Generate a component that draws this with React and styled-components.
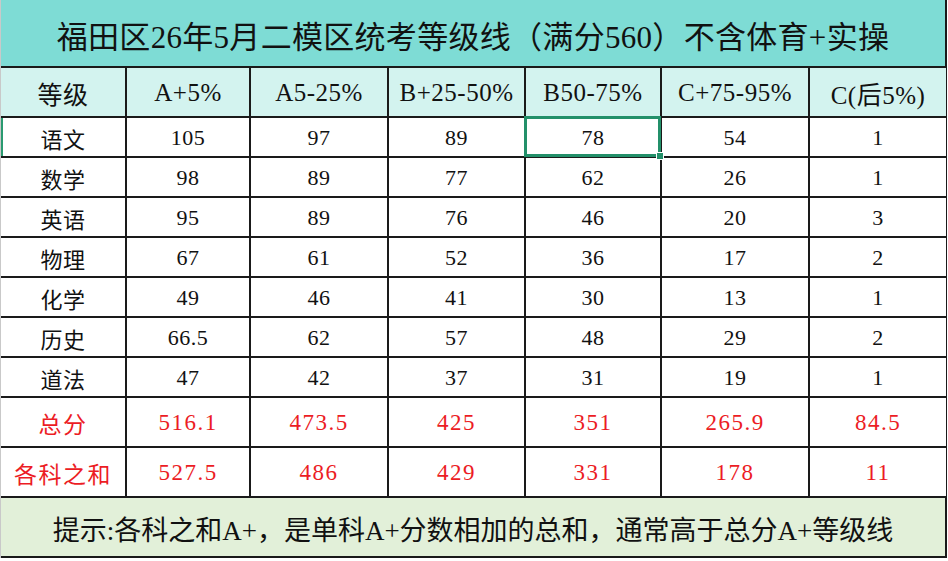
import React from "react"
import styled, { createGlobalStyle } from "styled-components"

const GlobalStyle = createGlobalStyle`
  html, body {
    margin: 0;
    padding: 0;
    background: #ffffff;
  }
  body {
    font-family: "Liberation Serif", "Noto Sans CJK SC", serif;
    color: #111;
  }
`

const COLS = [127, 124, 138, 137, 136, 148, 136]

const Sheet = styled.div`
  width: 948px;
  height: 561px;
  background: #ffffff;
  box-sizing: border-box;
`

const Board = styled.div`
  width: 947px;
  box-sizing: border-box;
  border-left: 1px solid #c9c9c9;
  border-right: 2px solid #1a1a1a;
`

const Title = styled.div`
  height: 68px;
  box-sizing: border-box;
  display: flex;
  align-items: center;
  justify-content: center;
  background: #7edcd5;
  border-bottom: 2px solid #1a1a1a;
  font-size: 31px;
  padding-top: 2px;
  letter-spacing: 0.3px;
`

const Grid = styled.div`
  display: grid;
  grid-template-columns: ${COLS.map((c, i) => (i === 0 ? `${c - 1}px` : `${c}px`)).join(" ")};
  grid-template-rows: 50px repeat(7, 40px) 50px 50px;
`

const Cell = styled.div`
  position: relative;
  z-index: ${(p) => (p.$selected ? 1 : "auto")};
  box-sizing: border-box;
  display: flex;
  align-items: center;
  justify-content: center;
  border-bottom: 2px solid #1a1a1a;
  border-right: ${(p) => (p.$last ? "none" : "2px solid #1a1a1a")};
  background: ${(p) => (p.$head ? "#d3f3ef" : "#ffffff")};
  color: ${(p) => (p.$red ? "#ec1c24" : "#111")};
  font-size: ${(p) => (p.$head ? "25px" : p.$red ? "23px" : "22px")};
  letter-spacing: ${(p) => (p.$red ? "1.5px" : p.$head ? "0.5px" : "0.5px")};
  padding-top: 2px;
  box-shadow: ${(p) => (p.$marked ? "inset 2px 0 0 #2a9a70" : "none")};

  ${(p) =>
    p.$selected &&
    `
    &::after {
      content: "";
      position: absolute;
      left: -2px;
      top: -2px;
      right: -1px;
      bottom: -1px;
      border: 3px solid #23906a;
      pointer-events: none;
    }
    &::before {
      content: "";
      position: absolute;
      right: -4px;
      bottom: -4px;
      width: 6px;
      height: 6px;
      background: #23906a;
      border: 1px solid #ffffff;
      z-index: 2;
    }
  `}
`

const Tip = styled.div`
  height: 60px;
  box-sizing: border-box;
  display: flex;
  align-items: center;
  justify-content: center;
  background: #e2f0d9;
  border-bottom: 2px solid #1a1a1a;
  font-size: 27px;
  padding-top: 2px;
`

const headers = ["等级", "A+5%", "A5-25%", "B+25-50%", "B50-75%", "C+75-95%", "C(后5%)"]

const rows = [
  ["语文", "105", "97", "89", "78", "54", "1"],
  ["数学", "98", "89", "77", "62", "26", "1"],
  ["英语", "95", "89", "76", "46", "20", "3"],
  ["物理", "67", "61", "52", "36", "17", "2"],
  ["化学", "49", "46", "41", "30", "13", "1"],
  ["历史", "66.5", "62", "57", "48", "29", "2"],
  ["道法", "47", "42", "37", "31", "19", "1"],
]

const totals = [
  ["总分", "516.1", "473.5", "425", "351", "265.9", "84.5"],
  ["各科之和", "527.5", "486", "429", "331", "178", "11"],
]

export default function App() {
  return (
    <Sheet>
      <GlobalStyle />
      <Board>
        <Title>福田区26年5月二模区统考等级线（满分560）不含体育+实操</Title>
        <Grid>
          {headers.map((h, i) => (
            <Cell key={h} $head $last={i === 6}>
              {h}
            </Cell>
          ))}
          {rows.map((r, ri) =>
            r.map((v, ci) => (
              <Cell
                key={`${ri}-${ci}`}
                $last={ci === 6}
                $marked={ri === 0 && ci === 0}
                $selected={ri === 0 && ci === 4}
              >
                {v}
              </Cell>
            ))
          )}
          {totals.map((r, ri) =>
            r.map((v, ci) => (
              <Cell key={`t${ri}-${ci}`} $red $last={ci === 6}>
                {v}
              </Cell>
            ))
          )}
        </Grid>
        <Tip>提示:各科之和A+，是单科A+分数相加的总和，通常高于总分A+等级线</Tip>
      </Board>
    </Sheet>
  )
}
